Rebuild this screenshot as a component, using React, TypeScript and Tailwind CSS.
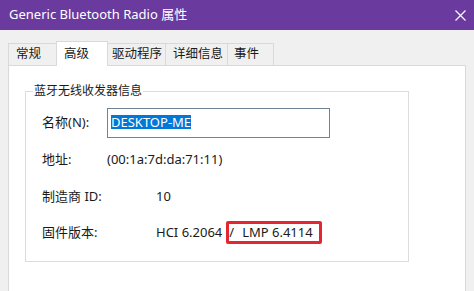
import React from 'react';

const tabs = [
  { label: '常规', w: 'w-[49px]', pl: 'pl-[7px]', active: false },
  { label: '高级', w: 'w-[52px]', pl: 'pl-[7px]', active: true },
  { label: '驱动程序', w: 'w-[59px]', pl: 'pl-[4px]', active: false },
  { label: '详细信息', w: 'w-[63px]', pl: 'pl-[7px]', active: false },
  { label: '事件', w: 'w-[47px]', pl: 'pl-[6px]', active: false },
];

export default function App() {
  return (
    <div className="w-[474px] h-[291px] overflow-hidden flex flex-col bg-[#f0f0f0] text-[#1a1a1a] font-['Noto_Sans','Noto_Sans_CJK_SC',sans-serif]">
      {/* title bar */}
      <div className="h-[30px] shrink-0 bg-[#6a3a9e] flex items-center justify-between pl-[9px] pr-[8px] text-white text-[13px]">
        <span>Generic Bluetooth Radio 属性</span>
        <svg width="11" height="11" viewBox="0 0 11 11">
          <path d="M0.5 0.5 L10.5 10.5 M10.5 0.5 L0.5 10.5" stroke="white" strokeWidth="1.2" fill="none" />
        </svg>
      </div>

      <div className="flex flex-col px-[8px] pt-[11px]">
        {/* tabs */}
        <div className="flex items-end">
          {tabs.map((t, i) => (
            <div
              key={t.label}
              className={`${t.w} ${t.pl} ${i > 0 ? '-ml-px' : ''} flex items-center text-[12.5px] border border-b-0 border-[#d9d9d9] ${
                t.active ? 'h-[25px] -mb-px bg-white relative z-10' : 'h-[22px] bg-[#f0f0f0]'
              }`}
            >
              {t.label}
            </div>
          ))}
        </div>

        {/* panel */}
        <div className="h-[234px] shrink-0 bg-white border border-[#d9d9d9]">
          <fieldset className="ml-[16px] mt-[17px] w-[384px] border border-[#dcdcdc] pb-[17px]">
            <legend className="ml-[7px] px-[1px] text-[12px] leading-[16px]">蓝牙无线收发器信息</legend>
            <div className="pl-[16px] text-[13px]">
              <div className="flex items-center mt-[9px] h-[30px]">
                <span className="w-[65px] shrink-0">名称(N):</span>
                <div className="w-[223px] h-[30px] border border-[#6f8394] pt-[4px] pl-[3px]">
                  <span className="bg-[#0078d7] text-white leading-[14px] inline-block">DESKTOP-ME</span>
                </div>
              </div>
              <div className="flex items-center mt-[12px] h-[20px]">
                <span className="w-[65px] shrink-0">地址:</span>
                <span>(00:1a:7d:da:71:11)</span>
              </div>
              <div className="flex items-center mt-[17px] h-[20px]">
                <span className="w-[114px] shrink-0">制造商 ID:</span>
                <span>10</span>
              </div>
              <div className="flex items-center mt-[14px] h-[23px]">
                <span className="w-[114px] shrink-0">固件版本:</span>
                <span>HCI 6.2064</span>
                <div className="ml-[4px] h-[23px] flex items-center border-[3px] border-[#e3262f] rounded-[2px] pr-[6px]">
                  <span>/</span>
                  <span className="ml-[8px]">LMP 6.4114</span>
                </div>
              </div>
            </div>
          </fieldset>
        </div>
      </div>
    </div>
  );
}
